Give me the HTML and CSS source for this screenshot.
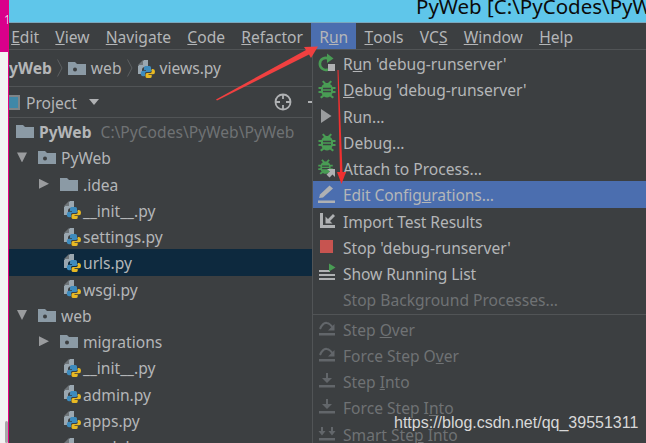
FILE: index.html
```html
<!DOCTYPE html>
<html lang="en">
<head>
<meta charset="utf-8">
<title>PyWeb</title>
<link rel="stylesheet" href="styles.css">
</head>
<body>
<svg class="defs" width="0" height="0" aria-hidden="true">
  <symbol id="py" viewBox="0 0 17 19">
    <path class="doc" d="M0 7 L6 1 H10 V8 H7 Q4 8 4 11 V15 H0 Z"/>
    <path class="doc" d="M0 6 L5 1 V6 Z" style="fill:#6e7478"/>
    <path class="pyb" d="M9 6 H12 Q14 6 14 8 V11 H8 V12 H6 Q3.500 12 3.500 14.500 Q3.500 17 6 17 H7 V14.500 Q7 12.800 9 12.800 H11 Q14 12.800 14 11 V8 Q14 6 12 6 Z M7.500 7 Q6 7 6 9 V11 H10 V11.800 H5 Q2.800 11.800 2.800 14.500 Q2.800 17.200 5 17.200 H6.400 V15 Q6.400 13 8.500 13 H11.500 Q13 13 13 11.500 V8.500 Q13 7 11.500 7 Z"/>
    <path class="pyy" d="M14.500 10 H13.700 V12.500 Q13.700 14 12 14 H9 Q7.500 14 7.500 15.500 V17.500 Q7.500 19 9.500 19 H12 Q13.700 19 13.700 17.500 V16 H10.500 V15.300 H15 Q17 15.300 17 12.700 Q17 10 15 10 Z"/>
  </symbol>
  <symbol id="folder" viewBox="0 0 18 14">
    <path class="fld" d="M0 1 H7 L9 3 H18 V14 H0 Z"/>
  </symbol>
  <symbol id="pkg" viewBox="0 0 18 14">
    <path class="fld" d="M0 1 H7 L9 3 H18 V14 H0 Z"/>
    <circle cx="7" cy="8.500" r="2" fill="#3c3f41"/>
  </symbol>
  <symbol id="bug" viewBox="0 0 20 20">
    <path class="grn" d="M6.500 1.500 L9 4 H11 L13.500 1.500 L15 2.800 L13 5 Q15 6 15.500 8 H18.500 V10 H16 V12 H18.500 V14 H15.500 Q15.200 15.500 14.500 16 L17 18 L15.500 19.500 L13 17.500 Q10 19.500 7 17.500 L4.500 19.500 L3 18 L5.500 16 Q4.800 15.500 4.500 14 H1.500 V12 H4 V10 H1.500 V8 H4.500 Q5 6 7 5 L5 2.800 Z"/>
    <path d="M6 9.500 H14 M6 12.500 H14" stroke="#3c3f41" stroke-width="1.300" fill="none"/>
  </symbol>
  <symbol id="over" viewBox="0 0 18 16">
    <path d="M2 8 Q5 1 9 2 Q12 2.500 15 7" class="dis" fill="none" stroke-width="2"/>
    <path class="disf" d="M16.500 3 V9.500 H10 Z"/>
    <rect class="disf" x="1" y="12" width="16" height="2.500"/>
  </symbol>
  <symbol id="into" viewBox="0 0 18 16">
    <path class="disf" d="M8 0 H10 V5 H14 L9 10 L4 5 H8 Z"/>
    <rect class="disf" x="1" y="12" width="16" height="2.500"/>
  </symbol>
  <symbol id="smart" viewBox="0 0 18 16">
    <path class="disf" d="M3 1 H5 V5 H7.500 L4 9.500 L.5 5 H3 Z M13 1 H15 V5 H17.500 L14 9.500 L10.500 5 H13 Z"/>
    <rect class="disf" x="1" y="12" width="16" height="2.500"/>
  </symbol>
</svg>

<div class="screen">
  <div class="edge">
    <div class="edge-tab"><span class="edge-num">1</span></div>
    <div class="edge-smudge"></div>
  </div>
  <div class="app">
    <header class="titlebar"><span class="title">PyWeb [C:\PyCodes\PyWeb]</span></header>
    <div class="window">
      <nav class="menubar">
        <span class="mi"><u>E</u>dit</span>
        <span class="mi"><u>V</u>iew</span>
        <span class="mi"><u>N</u>avigate</span>
        <span class="mi"><u>C</u>ode</span>
        <span class="mi"><u>R</u>efactor</span>
        <span class="mi active">R<u>u</u>n</span>
        <span class="mi"><u>T</u>ools</span>
        <span class="mi">VC<u>S</u></span>
        <span class="mi"><u>W</u>indow</span>
        <span class="mi"><u>H</u>elp</span>
      </nav>
      <div class="crumbs">
        <b class="crumb-root">yWeb</b>
        <svg class="chev" width="6" height="18" viewBox="0 0 6 18"><path d="M.5 .5 L5 9 L.5 17.500" fill="none" stroke="#5c5f61"/></svg>
        <svg class="ic18" width="18" height="14"><use href="#pkg"/></svg>
        <span>web</span>
        <svg class="chev" width="6" height="18" viewBox="0 0 6 18"><path d="M.5 .5 L5 9 L.5 17.500" fill="none" stroke="#5c5f61"/></svg>
        <svg class="ic-file" width="17" height="19"><use href="#py"/></svg>
        <span>views.py</span>
      </div>
      <div class="toolbar">
        <span class="proj-icon"></span>
        <span class="proj-label">Project</span>
        <svg class="drop" width="10" height="6" viewBox="0 0 10 6"><path d="M0 0 H10 L5 6 Z" fill="#afb1b3"/></svg>
        <svg class="target" width="18" height="18" viewBox="0 0 18 18"><circle cx="9" cy="9" r="7.500" fill="none" stroke="#afb1b3" stroke-width="1.800"/><path d="M9 1 V6 M9 12 V17 M1 9 H6 M12 9 H17" stroke="#afb1b3" stroke-width="1.800"/></svg>
        <span class="dash"></span>
      </div>
      <div class="tree">
        <div class="row root">
          <svg width="18" height="14"><use href="#folder"/></svg>
          <b>PyWeb</b><span class="path">C:\PyCodes\PyWeb\PyWeb</span>
        </div>
        <div class="row lv1"><span class="tw-down"></span><svg width="18" height="14"><use href="#pkg"/></svg><span>PyWeb</span></div>
        <div class="row lv2"><span class="tw-right"></span><svg width="18" height="14"><use href="#folder"/></svg><span>.idea</span></div>
        <div class="row file"><svg width="17" height="19"><use href="#py"/></svg><span>__init__.py</span></div>
        <div class="row file"><svg width="17" height="19"><use href="#py"/></svg><span>settings.py</span></div>
        <div class="row file selected"><svg width="17" height="19"><use href="#py"/></svg><span>urls.py</span></div>
        <div class="row file"><svg width="17" height="19"><use href="#py"/></svg><span>wsgi.py</span></div>
        <div class="row lv1"><span class="tw-down"></span><svg width="18" height="14"><use href="#pkg"/></svg><span>web</span></div>
        <div class="row lv2"><span class="tw-right"></span><svg width="18" height="14"><use href="#pkg"/></svg><span>migrations</span></div>
        <div class="row file"><svg width="17" height="19"><use href="#py"/></svg><span>__init__.py</span></div>
        <div class="row file"><svg width="17" height="19"><use href="#py"/></svg><span>admin.py</span></div>
        <div class="row file"><svg width="17" height="19"><use href="#py"/></svg><span>apps.py</span></div>
        <div class="row file"><svg width="17" height="19"><use href="#py"/></svg><span>models.py</span></div>
      </div>

      <div class="menu">
        <div class="item">
          <svg class="mic" width="20" height="20" viewBox="0 0 20 20"><path d="M11.500 5.500 A6 6 0 1 0 11 16.500" fill="none" stroke="#499c54" stroke-width="2.600"/><path class="grn" d="M10 0.500 L16.500 5.500 L10 10 Z"/><rect x="11" y="11" width="7" height="7" fill="#afb1b3"/></svg>
          <span>R<u>u</u>n 'debug-runserver'</span>
        </div>
        <div class="item"><svg class="mic" width="20" height="20"><use href="#bug"/></svg><span><u>D</u>ebug 'debug-runserver'</span></div>
        <div class="item"><svg class="mic" width="20" height="20" viewBox="0 0 20 20"><path d="M4 3 L14.500 10 L4 17 Z" fill="#9a9c9e"/></svg><span>Run...</span></div>
        <div class="item"><svg class="mic" width="20" height="20"><use href="#bug"/></svg><span>Debug...</span></div>
        <div class="item">
          <svg class="mic" width="20" height="20" viewBox="0 0 20 20"><use href="#bug" width="17" height="17" x="0" y="0"/><path d="M10 11 H18 V19 L15.500 16.500 L12.500 19.500 L9.500 16.500 L13 13.500 Z" fill="#afb1b3"/></svg>
          <span>Attach to Process...</span>
        </div>
        <div class="item on">
          <svg class="mic" width="20" height="20" viewBox="0 0 20 20"><path d="M2 14 L3 10.500 L12.500 1.500 L16 4.500 L6 13.500 Z" fill="#afb1b3"/><rect x="1" y="16.500" width="17" height="2.500" fill="#afb1b3"/></svg>
          <span class="snug">Edit Config<u>u</u>rations...</span>
        </div>
        <div class="item">
          <svg class="mic" width="20" height="20" viewBox="0 0 20 20"><path d="M3 2 H6 V14 H18 V17 H3 Z M16 3 L18 5 L13 10 L15.500 12.500 H8.500 V5.500 L11 8 Z" fill="#afb1b3"/></svg>
          <span class="snug">Import Test Results</span>
        </div>
        <div class="item"><svg class="mic" width="20" height="20" viewBox="0 0 20 20"><rect x="3" y="3" width="13" height="13" fill="#c75450"/></svg><span>Stop 'debug-runserver'</span></div>
        <div class="item">
          <svg class="mic" width="20" height="20" viewBox="0 0 20 20"><path d="M2 7 H13 V9 H2 Z M2 11 H18 V13 H2 Z M2 15 H18 V17 H2 Z" fill="#afb1b3"/><path class="grn" d="M12 0.500 L18.500 4.500 L12 8.500 Z"/></svg>
          <span class="snug">Show Running List</span>
        </div>
        <div class="item off"><span class="noicon">Stop Background Processes...</span></div>
        <div class="sep"></div>
        <div class="item off"><svg class="mic" width="18" height="16"><use href="#over"/></svg><span>Step <u>O</u>ver</span></div>
        <div class="item off"><svg class="mic" width="18" height="16"><use href="#over"/></svg><span>Force Step O<u>v</u>er</span></div>
        <div class="item off"><svg class="mic" width="18" height="16"><use href="#into"/></svg><span>Step <u>I</u>nto</span></div>
        <div class="item off"><svg class="mic" width="18" height="16"><use href="#into"/></svg><span>Force Step I<u>n</u>to</span></div>
        <div class="item off"><svg class="mic" width="18" height="16"><use href="#smart"/></svg><span>Smart Ste<u>p</u> Into</span></div>
      </div>
    </div>
  </div>

  <svg class="arrows" width="646" height="443" viewBox="0 0 646 443" aria-hidden="true">
    <path d="M216 99.500 L306 50 L304 47 L318 46.500 L311 58 L309 54.500 L217 100.500 Z" fill="#f04040"/>
    <path d="M337.500 70 L338.500 70 L342.500 172 L346 172 L341.500 184 L337 172 L340 172 Z" fill="#f03030"/>
  </svg>
  <span class="watermark">https://blog.csdn.net/qq_39551311</span>
</div>
</body>
</html>
```

FILE: styles.css
```css
* { box-sizing: border-box; }

html, body {
  margin: 0;
  padding: 0;
  overflow: hidden;
}

.defs { position: absolute; }

.doc { fill: #9aa7b0; }
.pyb { fill: #3d8bbd; }
.pyy { fill: #e8b923; }
.fld { fill: #8b9aa5; }
.grn { fill: #499c54; }
.dis { stroke: #62666a; }
.disf { fill: #62666a; }

.screen {
  position: relative;
  display: flex;
  width: 646px;
  height: 443px;
  overflow: hidden;
  font-family: "Noto Sans", sans-serif;
  font-size: 15.6px;
  color: #b4b6b8;
  background: #3c3f41;
}

.edge {
  flex: none;
  width: 9px;
  background: #f2f2f2;
  border-right: 1px solid #e6007f;
}

.edge-tab {
  height: 52px;
  background: #d9008b;
  overflow: hidden;
}

.edge-num {
  display: block;
  padding: 12px 0 0 4px;
  font-size: 12px;
  line-height: 16px;
  color: #f3cfe4;
}

.edge-smudge {
  width: 3px;
  height: 22px;
  margin: 369px 0 0 5px;
  background: #a8a8a8;
  border-radius: 2px;
}

.app {
  flex: 1;
  min-width: 0;
  display: flex;
  flex-direction: column;
}

.titlebar {
  flex: none;
  height: 23px;
  padding-left: 407px;
  background: #5fc6ea;
  border-bottom: 1px solid #7aa7bd;
  overflow: hidden;
  white-space: nowrap;
}

.title {
  display: block;
  font-size: 20.5px;
  line-height: 12px;
  color: #0b0b0b;
}

.window {
  position: relative;
  flex: 1;
  min-height: 0;
  overflow: hidden;
}

.menubar {
  display: flex;
  height: 27px;
  margin-left: -6px;
  align-items: stretch;
  border-bottom: 1px solid #515456;
  white-space: nowrap;
}

.mi {
  display: flex;
  align-items: center;
  padding: 2px 8.15px 0;
}

.mi.active {
  background: #4b6eaf;
}

.crumbs {
  display: flex;
  align-items: center;
  gap: 5px;
  height: 37px;
  border-bottom: 1px solid #515456;
  white-space: nowrap;
}

.toolbar {
  display: flex;
  align-items: center;
  height: 31px;
  border-bottom: 1px solid #515456;
}

.proj-label { padding-top: 2px; }

.proj-icon {
  width: 11px;
  height: 15px;
  margin-right: 6px;
  background: #3f88a8;
  border: 2px solid #7f8588;
  border-left: 0;
}

.drop { margin-left: 12px; }

.target { margin-left: 175px; }

.dash {
  width: 4px;
  height: 2px;
  margin-left: 16px;
  background: #afb1b3;
}

.tree { white-space: nowrap; }

.row {
  display: flex;
  align-items: center;
  height: 26.25px;
}

.row > span,
.row > b,
.item > span { padding-top: 2px; }

.root { padding-left: 7px; }
.root b { margin-left: 5px; }
.path { margin-left: 9px; color: #6f7274; }

.lv1 { padding-left: 8px; }
.lv2 { padding-left: 30px; }
.lv1 svg, .lv2 svg { margin-left: 11px; margin-right: 5px; }

.file { padding-left: 55px; }
.file svg { margin-right: 2px; }

.selected { background: #0d293e; }

.tw-down {
  width: 10px;
  height: 10px;
  background: #9a9c9e;
  clip-path: polygon(0 0, 100% 0, 50% 100%);
}

.tw-right {
  width: 10px;
  height: 10px;
  background: #9a9c9e;
  clip-path: polygon(0 0, 100% 50%, 0 100%);
}

.menu {
  position: absolute;
  top: 27px;
  left: 303px;
  right: 0;
  bottom: 0;
  padding-top: 0;
  background: #3c3f41;
  border-left: 1px solid #515456;
  white-space: nowrap;
}

.item {
  display: flex;
  align-items: center;
  height: 26.25px;
  padding-left: 4px;
}

.mic {
  flex: none;
  width: 20px;
  margin-right: 6px;
}

.snug { letter-spacing: -.1px; }

.noicon { margin-left: 26px; }

.on { background: #4b6eaf; }

.off { color: #6f7274; }

.sep {
  height: 1px;
  margin: 1px 0 1px;
  background: #515456;
}

.arrows {
  position: absolute;
  top: 0;
  left: 0;
  pointer-events: none;
}

.watermark {
  position: absolute;
  top: 414px;
  left: 394px;
  font-family: "Liberation Sans", sans-serif;
  font-size: 16px;
  line-height: 18px;
  color: #d8d8d8;
  white-space: nowrap;
}
```
